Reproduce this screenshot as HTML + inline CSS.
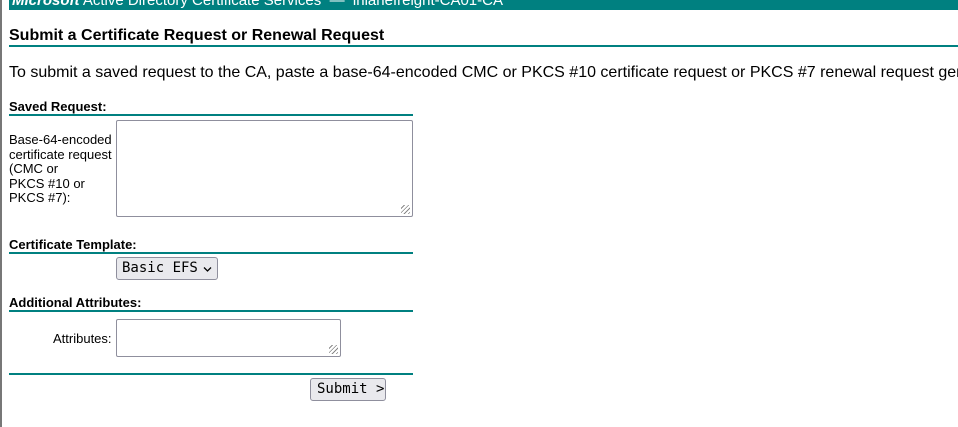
<!DOCTYPE html>
<html><head><style>
html,body{margin:0;width:958px;height:427px;overflow:hidden}
body{background:#fff;font-family:"Liberation Sans",sans-serif;position:relative;color:#000}
.wrap{position:absolute;left:0;top:0;width:958px;height:427px;overflow:hidden}
.lb{position:absolute;left:0;top:0;width:2px;height:427px;background:#777}
.top{position:absolute;left:9px;top:0;width:949px;height:10px;background:#008080;overflow:hidden}
.top span{position:absolute;left:3px;top:-8px;color:#fff;font-size:15px;white-space:nowrap}
.abs{position:absolute;white-space:nowrap}
.line{position:absolute;background:#008080;height:2px}
.h{font-size:13px;font-weight:bold}
.ta{position:absolute;border:1px solid #8f8f9d;border-radius:2px;background:#fff}
.btn{position:absolute;border:1px solid #8f8f9d;border-radius:3px;background:#e9e9ed;font-family:"DejaVu Sans Mono","Liberation Mono",monospace;font-size:14px;box-sizing:border-box}
.grip{position:absolute;right:2px;bottom:2px;width:9px;height:9px;background:repeating-linear-gradient(135deg,transparent 0 2px,#888 2px 3px)}
</style></head><body><div class="wrap">
<div class="lb"></div>
<div class="top"><span><b><i>Microsoft</i></b> Active Directory Certificate Services &nbsp;&mdash; &nbsp;inlanefreight-CA01-CA</span></div>
<div class="abs" style="left:9px;top:27px;font-size:16px;font-weight:bold">Submit a Certificate Request or Renewal Request</div>
<div class="line" style="left:9px;top:45px;width:949px"></div>
<div class="abs" style="left:9px;top:64px;font-size:16px">To submit a saved request to the CA, paste a base-64-encoded CMC or PKCS #10 certificate request or PKCS #7 renewal request generated by an external source</div>
<div class="abs h" style="left:9px;top:99px">Saved Request:</div>
<div class="line" style="left:9px;top:114px;width:404px"></div>
<div class="abs" style="left:9px;top:133px;font-size:13px;line-height:14.5px">Base-64-encoded<br>certificate request<br>(CMC or<br>PKCS #10 or<br>PKCS #7):</div>
<div class="ta" style="left:116px;top:120px;width:295px;height:95px"><div class="grip"></div></div>
<div class="abs h" style="left:9px;top:237px">Certificate Template:</div>
<div class="line" style="left:9px;top:252px;width:404px"></div>
<div class="btn" style="left:116px;top:257px;width:102px;height:23px;padding:2px 0 0 5px">Basic EFS<svg width="10" height="8" style="position:absolute;left:86px;top:8px"><path d="M1 1.5 L4.5 5 L8 1.5" fill="none" stroke="#000" stroke-width="1.3"/></svg></div>
<div class="abs h" style="left:9px;top:295px">Additional Attributes:</div>
<div class="line" style="left:9px;top:310px;width:404px"></div>
<div class="abs" style="left:53px;top:331px;font-size:13px">Attributes:</div>
<div class="ta" style="left:116px;top:319px;width:223px;height:36px"><div class="grip"></div></div>
<div class="line" style="left:9px;top:373px;width:404px"></div>
<div class="btn" style="left:310px;top:378px;width:76px;height:23px;padding:2px 0 0 6px">Submit &gt;</div>
</div></body></html>
